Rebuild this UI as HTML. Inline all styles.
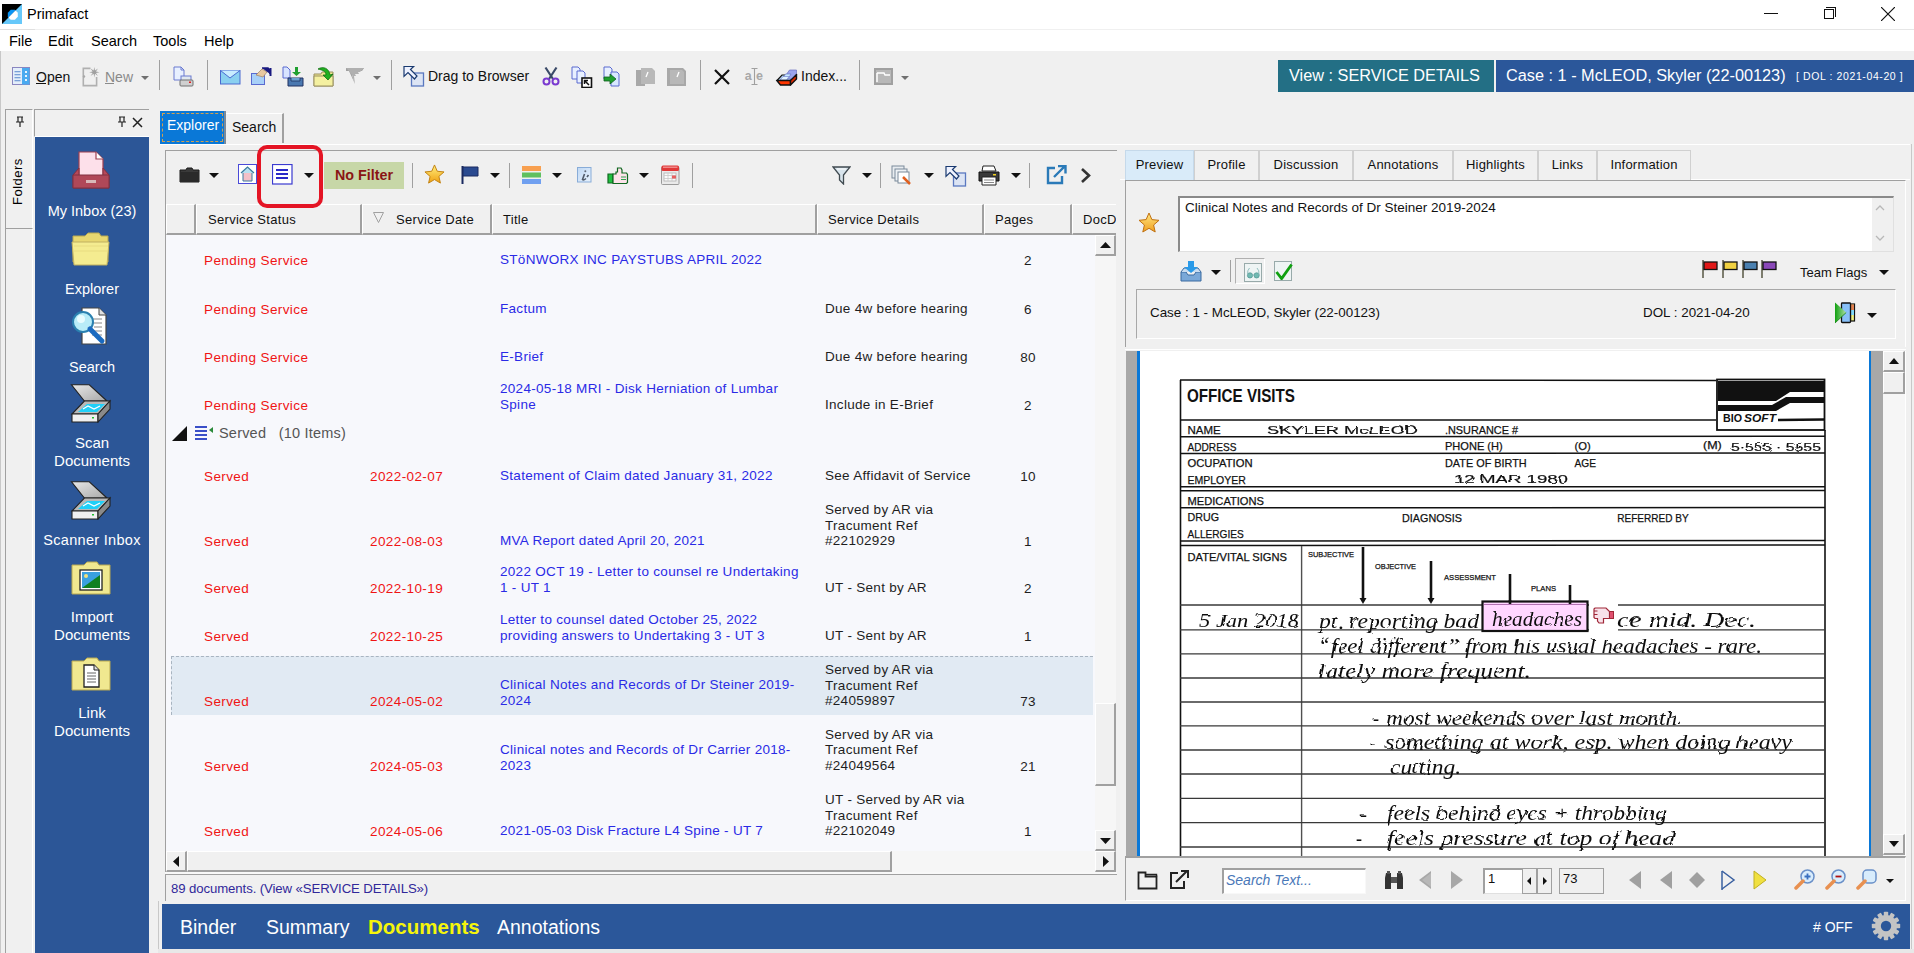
<!DOCTYPE html>
<html><head><meta charset="utf-8">
<style>
*{box-sizing:border-box;margin:0;padding:0}
body{width:1914px;height:953px;overflow:hidden;background:#f0f0f0;font-family:"Liberation Sans",sans-serif;position:relative;font-size:13px;color:#000}
.a{position:absolute}
.t{position:absolute;white-space:nowrap;line-height:16px}
.r{color:#f01414;letter-spacing:0.4px;font-size:13.5px}
.b{color:#2a2ae6;letter-spacing:0.3px;font-size:13.5px}
.k{color:#1e1e1e;letter-spacing:0.3px;font-size:13.5px}
.hdr{position:absolute;top:204px;height:31px;padding-top:1px;background:#f0f0f0;border-right:2px solid #a0a0a0;border-bottom:2px solid #a0a0a0;border-top:1px solid #fff;border-left:1px solid #fff;font-size:13px;line-height:28px;padding-left:11px;letter-spacing:0.3px;color:#111}
.sep{position:absolute;width:1px;background:#a0a0a0}
.ptab{position:absolute;top:150px;height:30px;border:1px solid #d0d0d0;border-bottom:none;background:#f0f0f0;font-size:13px;line-height:28px;text-align:center;color:#111;letter-spacing:0.2px}
.ln{position:absolute;background:#1a1a1a;height:2px}
.ft{position:absolute;font-size:11.5px;color:#111;white-space:nowrap;transform-origin:0 0;transform:scaleX(0.9);line-height:12px}
.hw{position:absolute;font-family:"Liberation Serif",serif;font-style:italic;color:#111;white-space:nowrap;font-size:19px;line-height:20px;letter-spacing:0.5px}
.lbl{position:absolute;color:#fff;text-align:center;font-size:13.5px;line-height:16px;white-space:nowrap}
.arr{position:absolute;width:0;height:0;border-left:5px solid transparent;border-right:5px solid transparent;border-top:5px solid #111}
</style></head><body>

<!-- ===== TITLE BAR ===== -->
<div class="a" style="left:0;top:0;width:1914px;height:29px;background:#fff"></div>
<div class="a" style="left:0;top:29px;width:35px;height:1px;background:#e0e0e0"></div>
<div class="a" style="left:1180px;top:29px;width:734px;height:1px;background:#e6e6e6"></div>
<svg class="a" style="left:2px;top:4px" width="20" height="20" viewBox="0 0 20 20"><defs><clipPath id="ul"><path d="M0 0H20L0 20Z"/></clipPath><clipPath id="lr"><path d="M20 0V20H0Z"/></clipPath></defs><rect width="20" height="20" fill="#66c8fa"/><path d="M0 0H20L0 20Z" fill="#000"/><polygon points="15.79,12.87 12.87,15.79 8.73,15.79 5.81,12.87 5.81,8.73 8.73,5.81 12.87,5.81 15.79,8.73" fill="#0a94f4" clip-path="url(#ul)"/><polygon points="15.79,12.87 12.87,15.79 8.73,15.79 5.81,12.87 5.81,8.73 8.73,5.81 12.87,5.81 15.79,8.73" fill="#fff" clip-path="url(#lr)"/></svg>
<div class="t" style="left:27px;top:6px;font-size:14.5px;color:#000">Primafact</div>
<div class="a" style="left:1764px;top:13px;width:14px;height:1px;background:#111"></div>
<div class="a" style="left:1824px;top:9px;width:10px;height:10px;border:1px solid #111;background:#fff"></div>
<div class="a" style="left:1826px;top:7px;width:10px;height:10px;border-top:1px solid #111;border-right:1px solid #111"></div>
<svg class="a" style="left:1881px;top:7px" width="14" height="14"><path d="M0 0L14 14M14 0L0 14" stroke="#111" stroke-width="1.2"/></svg>

<!-- ===== MENU BAR ===== -->
<div class="a" style="left:0;top:30px;width:1914px;height:21px;background:#fff"></div>
<div class="t" style="left:9px;top:33px;font-size:14.5px">File</div>
<div class="t" style="left:48px;top:33px;font-size:14.5px">Edit</div>
<div class="t" style="left:91px;top:33px;font-size:14.5px">Search</div>
<div class="t" style="left:153px;top:33px;font-size:14.5px">Tools</div>
<div class="t" style="left:204px;top:33px;font-size:14.5px">Help</div>

<!-- ===== TOOLBAR (filled later) ===== -->
<div id="toolbar">
<div class="a" style="left:0;top:51px;width:1px;height:902px;background:#c8c8c8"></div>
<!-- Open -->
<svg class="a" style="left:12px;top:67px" width="19" height="19" viewBox="0 0 19 19"><rect x="0.5" y="0.5" width="17" height="17" fill="#e4eefa" stroke="#8a86c0"/><rect x="10" y="1" width="7.5" height="16.5" fill="#4aaaf0"/><g fill="#7aa0d8"><rect x="2.5" y="4" width="6" height="1.3"/><rect x="2.5" y="7" width="6" height="1.3"/><rect x="2.5" y="10" width="6" height="1.3"/><rect x="2.5" y="13" width="6" height="1.3"/></g><g fill="#e8f4ff"><rect x="13" y="4" width="2" height="2"/><rect x="13" y="8" width="2" height="2"/><rect x="13" y="12" width="2" height="2"/></g></svg>
<div class="t" style="left:36px;top:69px;font-size:14px;color:#111">Open</div>
<div class="a" style="left:36px;top:83px;width:10px;height:1px;background:#111"></div>
<!-- New -->
<svg class="a" style="left:80px;top:65px" width="22" height="23" viewBox="80 65 22 23"><path d="M90.5 68.4H83.3V85.6H96.6V77" stroke="#b0b0b0" stroke-width="1.6" fill="none"/><circle cx="84" cy="76.5" r="1.2" fill="#a8a8a8"/><polygon points="94.30,67.00 94.99,70.54 97.98,68.52 95.96,71.51 99.50,72.20 95.96,72.89 97.98,75.88 94.99,73.86 94.30,77.40 93.61,73.86 90.62,75.88 92.64,72.89 89.10,72.20 92.64,71.51 90.62,68.52 93.61,70.54" fill="#a0a0a0"/></svg>
<div class="t" style="left:105px;top:69px;font-size:14px;color:#8a8a8a">New</div>
<div class="a" style="left:105px;top:83px;width:9px;height:1px;background:#8a8a8a"></div>
<div class="arr" style="left:141px;top:76px;border-top-color:#707070;border-left-width:4px;border-right-width:4px;border-top-width:4px"></div>
<div class="sep" style="left:159px;top:60px;height:30px"></div>
<!-- print docs -->
<svg class="a" style="left:173px;top:66px" width="22" height="22" viewBox="0 0 22 22"><path d="M1 1H8L11 4V14H1Z" fill="#e8f0ff" stroke="#6a7ad0"/><path d="M8 1V4H11" fill="none" stroke="#6a7ad0"/><rect x="8" y="10" width="10" height="5" fill="#e0e8f0" stroke="#6a7ad0"/><rect x="7" y="14" width="13" height="6" rx="1" fill="#d0d0d0" stroke="#707070"/><rect x="16" y="15.5" width="2" height="1.5" fill="#e02020"/></svg>
<div class="sep" style="left:207px;top:60px;height:30px"></div>
<!-- mail -->
<svg class="a" style="left:220px;top:70px" width="21" height="15" viewBox="0 0 21 15"><rect x="0.5" y="0.5" width="19.5" height="13.5" fill="#8ad0f0" stroke="#4a6ad0"/><path d="M0.5 0.5L10 8L20 0.5" fill="#c8ecff" stroke="#4a6ad0"/></svg>
<svg class="a" style="left:251px;top:66px" width="22" height="20" viewBox="0 0 22 20"><rect x="0.5" y="7.5" width="13" height="11" fill="#a8d0f8" stroke="#5a6ad0"/><path d="M5 9L11 3L16 6L12 11Z" fill="#e8c8a0" stroke="#a08060" stroke-width="0.7"/><path d="M11 2H17L19 4V8" fill="#1a1a80" stroke="#1a1a80" stroke-width="1.5"/><rect x="18.5" y="2" width="2" height="8" fill="#1a1a80"/></svg>
<svg class="a" style="left:282px;top:66px" width="22" height="21" viewBox="0 0 22 21"><path d="M1 1H5L8 4V12H1Z" fill="#d8e4ff" stroke="#5a6ad0"/><rect x="13" y="1" width="3" height="5" fill="#20a030"/><path d="M10 6H19L14.5 10Z" fill="#20a030"/><path d="M6 12H21V20H6Z" fill="#4a78b0" stroke="#203060"/><path d="M9 12V15H18V12" fill="#6aa0d0" stroke="#203060" stroke-width="0.8"/></svg>
<svg class="a" style="left:313px;top:66px" width="22" height="21" viewBox="0 0 22 21"><path d="M1 8H8L9 6H20V20H1Z" fill="#f0e890" stroke="#9a9060"/><path d="M1 10H20V20H1Z" fill="#f4f0a0" stroke="#9a9060"/><path d="M5 3C10 0 16 2 17 9L20 8L15 14L10 9L13 9C13 5 9 4 5 3Z" fill="#20b020" stroke="#107010" stroke-width="0.8"/></svg>
<svg class="a" style="left:345px;top:67px" width="20" height="18" viewBox="0 0 20 18"><path d="M1 1H19L17 4H10L13 6H7L10 8H7L10 17L4 4H1Z" fill="#a0a0a0"/><path d="M1 1H19L15 5H13L14 7H10L11 9H9L10 17L7 8L3 3Z" fill="#b0b0b0"/></svg>
<div class="arr" style="left:373px;top:76px;border-top-color:#707070;border-left-width:4px;border-right-width:4px;border-top-width:4px"></div>
<div class="sep" style="left:391px;top:60px;height:30px"></div>
<!-- drag -->
<svg class="a" style="left:403px;top:65px" width="22" height="22" viewBox="0 0 22 22"><rect x="8.5" y="8" width="12" height="13" fill="#dce4f4" stroke="#5a78c0" stroke-width="1.3"/><path d="M1 1.5H10.6L7.5 4.5L14 11L11.5 14L5 7.5L1 11.4Z" fill="#eef2ff" stroke="#1a3a70" stroke-width="1.2"/></svg>
<div class="t" style="left:428px;top:68px;font-size:14px;color:#111">Drag to Browser</div>
<svg class="a" style="left:542px;top:66px" width="18" height="20" viewBox="0 0 18 20"><path d="M3.5 1.5L11 13M14.5 1.5L7 13" stroke="#3a4a68" stroke-width="2.2"/><circle cx="4.5" cy="15.5" r="3" fill="none" stroke="#7a3ad0" stroke-width="2"/><circle cx="13.5" cy="15.5" r="3" fill="none" stroke="#7a3ad0" stroke-width="2"/></svg>
<svg class="a" style="left:571px;top:66px" width="22" height="22" viewBox="0 0 22 22"><path d="M1 1H7L9 3V13H1Z" fill="#e8f0ff" stroke="#5a6ad0"/><path d="M6 5H12L14 7V17H6Z" fill="#e8f0ff" stroke="#5a6ad0"/><rect x="11" y="12" width="9.5" height="9.5" fill="#fff" stroke="#111" stroke-width="1.6"/><path d="M18 19L13.5 14.5M13.5 18V14.5H17" stroke="#111" stroke-width="1.5" fill="none"/></svg>
<svg class="a" style="left:603px;top:66px" width="22" height="22" viewBox="0 0 22 22"><path d="M1 1H7L9 3V13H1Z" fill="#e8f0ff" stroke="#5a6ad0"/><path d="M8 6H14L16 8V20H8Z" fill="#d8e8ff" stroke="#5a6ad0"/><path d="M1 11H7V8L13 13L7 18V15H1Z" fill="#20a030" stroke="#106020" stroke-width="0.8"/></svg>
<svg class="a" style="left:635px;top:67px" width="21" height="20" viewBox="0 0 21 20"><path d="M1 3H9L10 5V19H1Z" fill="#a8a8a8"/><path d="M6 1H17L20 4V17H6Z" fill="#b8b8b8"/><path d="M13 5L11 10" stroke="#fff" stroke-width="1.3"/></svg>
<svg class="a" style="left:666px;top:67px" width="21" height="20" viewBox="0 0 21 20"><path d="M1 1H17L20 4V19H1Z" fill="#a8a8a8"/><path d="M4 3H16L18 5V17H4Z" fill="#b8b8b8"/><path d="M13 5L11 10" stroke="#fff" stroke-width="1.3"/></svg>
<div class="sep" style="left:700px;top:60px;height:30px"></div>
<svg class="a" style="left:713px;top:68px" width="18" height="18"><path d="M2 2L16 16M16 2L2 16" stroke="#111" stroke-width="2.2"/></svg>
<svg class="a" style="left:744px;top:66px" width="22" height="20" viewBox="744 66 22 20"><text x="744.8" y="80.2" font-family="Liberation Sans" font-size="12.5" font-weight="bold" fill="#a8a8a8">a</text><text x="756" y="80.2" font-family="Liberation Sans" font-size="12.5" font-weight="bold" fill="#a8a8a8">e</text><path d="M751.5 68.5H757.5M754.5 68.5V84.5M751.5 84.5H757.5" stroke="#a0a0a0" stroke-width="1.1" fill="none"/></svg>
<svg class="a" style="left:775px;top:67px" width="24" height="20" viewBox="775 67 24 20"><path d="M777 80.5L782 75H796L790.5 80.5Z" fill="#b8d8f8" stroke="#111" stroke-width="1.2"/><path d="M786 75L789.5 70H796.5V75L793 79H786Z" fill="#9aa4ee" stroke="#6a70c0" stroke-width="0.7"/><path d="M782.5 79L785.5 74H791L788 79Z" fill="#c8e8ff" stroke="#6a78c8" stroke-width="0.7"/><path d="M780 80L783 76.5H789L786.5 80Z" fill="#e0f2ff" stroke="#6a78c8" stroke-width="0.6"/><path d="M776.8 80.5H790.5V85H780.5Z" fill="#ff3600" stroke="#111" stroke-width="1.4" stroke-linejoin="round"/><path d="M790.5 80.5L796.5 74.5V79L790.5 85Z" fill="#e02a00" stroke="#111" stroke-width="1.4" stroke-linejoin="round"/></svg>
<div class="t" style="left:801px;top:68px;font-size:14px;color:#111">Index...</div>
<div class="sep" style="left:859px;top:60px;height:30px"></div>
<svg class="a" style="left:874px;top:68px" width="19" height="17"><rect x="0" y="0" width="19" height="17" fill="#a0a0a0"/><rect x="2" y="2" width="15" height="13" fill="#b8b8b8"/><path d="M3 5H10L11 7H16" stroke="#fff" stroke-width="1.5" fill="none"/><path d="M3 5V14" stroke="#fff" stroke-width="1.5"/></svg>
<div class="arr" style="left:901px;top:76px;border-top-color:#707070;border-left-width:4px;border-right-width:4px;border-top-width:4px"></div>

</div>

<!-- ===== HEADER LABELS ===== -->
<div class="a" style="left:1278px;top:60px;width:216px;height:32px;background:#236f85"></div>
<div class="t" style="left:1289px;top:66px;font-size:16.3px;color:#fff;line-height:18px">View : SERVICE DETAILS</div>
<div class="a" style="left:1496px;top:60px;width:418px;height:32px;background:#2b579a"></div>
<div class="t" style="left:1506px;top:66px;font-size:16.3px;color:#fff;line-height:18px">Case : 1 - McLEOD, Skyler (22-00123)</div>
<div class="t" style="left:1796px;top:69px;font-size:10.5px;color:#fff;line-height:14px;letter-spacing:0.6px">[ DOL : 2021-04-20 ]</div>

<!-- ===== LEFT SIDEBAR ===== -->
<div class="a" style="left:5px;top:109px;width:28px;height:119px;border-left:1px solid #a0a0a0;border-top:1px solid #a0a0a0;border-right:1px solid #fff;background:#f0f0f0"></div>
<div class="a" style="left:5px;top:228px;width:28px;height:725px;border-left:1px solid #a0a0a0;border-top:1px solid #a0a0a0;border-right:1px solid #fff;background:#f0f0f0"></div>
<div class="t" style="left:10px;top:205px;font-size:13px;transform:rotate(-90deg);transform-origin:0 0;letter-spacing:0.5px">Folders</div>
<div class="a" style="left:34px;top:109px;width:115px;height:28px;border-top:1px solid #a0a0a0;border-left:1px solid #a0a0a0;border-bottom:1px solid #fff;background:#f0f0f0"></div>
<div class="a" style="left:35px;top:137px;width:114px;height:816px;background:#2c5697"></div>

<div id="sidebar">
<svg class="a" style="left:15px;top:116px" width="10" height="12" viewBox="0 0 10 12"><path d="M2 1H8M3 1V6H7V1M1 6H9M5 6V11" stroke="#222" stroke-width="1.2" fill="none"/></svg>
<svg class="a" style="left:117px;top:116px" width="10" height="12" viewBox="0 0 10 12"><path d="M2 1H8M3 1V6H7V1M1 6H9M5 6V11" stroke="#222" stroke-width="1.2" fill="none"/></svg>
<svg class="a" style="left:132px;top:117px" width="11" height="11"><path d="M1 1L10 10M10 1L1 10" stroke="#222" stroke-width="1.5"/></svg>
<!-- inbox -->
<svg class="a" style="left:72px;top:151px" width="38" height="38" viewBox="0 0 38 38"><path d="M7 1H24L31 8V28H7Z" fill="#fde0ea" stroke="#a04050" stroke-width="1.2"/><path d="M24 1V8H31" fill="#fff" stroke="#a04050" stroke-width="1.2"/><path d="M1 24L7 17V26H31V17L37 24V37H1Z" fill="#b84858" stroke="#803040" stroke-width="1"/><path d="M1 24H37V37H1Z" fill="#b04858" stroke="#803040"/><rect x="14" y="29" width="10" height="3" fill="#d8b8b8"/></svg>
<div class="lbl" style="left:35px;width:114px;top:203px;font-size:14.5px">My Inbox (23)</div>
<!-- explorer folder -->
<svg class="a" style="left:71px;top:232px" width="40" height="34" viewBox="0 0 40 34"><path d="M2 4H14L17 1H28L30 4H37V30H2Z" fill="#e8d870" stroke="#b8a850"/><path d="M1 10H38L36 33H3Z" fill="#f4ec90" stroke="#c0b060"/><path d="M3 14H37M3 19H37" stroke="#e8dc80" stroke-width="1"/></svg>
<div class="lbl" style="left:35px;width:114px;top:281px;font-size:14.5px">Explorer</div>
<!-- search -->
<svg class="a" style="left:70px;top:306px" width="41" height="40" viewBox="0 0 41 40"><path d="M12 2H29L36 9V38H12Z" fill="#fff" stroke="#444" stroke-width="1.2"/><path d="M29 2V9H36" fill="#e0e0e0" stroke="#444"/><g stroke="#888" stroke-width="1.2"><path d="M20 13H32M22 17H32M24 21H32M22 25H32M22 29H32"/></g><circle cx="13" cy="16" r="10" fill="#b8ecf8" stroke="#2a80b0" stroke-width="2"/><circle cx="11" cy="13" r="4" fill="#e8fcff"/><path d="M20 23L32 35" stroke="#1a6ac0" stroke-width="5" stroke-linecap="round"/></svg>
<div class="lbl" style="left:35px;width:114px;top:359px;font-size:14.5px">Search</div>
<!-- scan -->
<svg class="a" style="left:70px;top:383px" width="42" height="40" viewBox="0 0 42 40"><defs><linearGradient id="lidg" x1="0" y1="0" x2="1" y2="1"><stop offset="0" stop-color="#e8e8e8"/><stop offset="1" stop-color="#a8a8a8"/></linearGradient></defs><path d="M1.5 1.8H19.3L37 18H14.4Z" fill="url(#lidg)" stroke="#222" stroke-width="1.1"/><path d="M2 31L14.4 18H40L28 31Z" fill="#b8b8b8" stroke="#222" stroke-width="1.1"/><path d="M8 29L17 21H35L27 29Z" fill="#20d0f8"/><path d="M13 26L18 23L24 26L30 23" stroke="#fff" stroke-width="1.2" fill="none"/><path d="M2 31H28V39H2Z" fill="#f0f0f0" stroke="#222" stroke-width="1.1"/><path d="M28 31L40 18V26L28 39Z" fill="#8a8a8a" stroke="#222" stroke-width="1.1"/><rect x="22" y="34" width="2" height="1.5" fill="#20c030"/></svg>
<div class="lbl" style="left:35px;width:114px;top:434px;font-size:15px;line-height:18px">Scan<br>Documents</div>
<!-- scanner inbox -->
<svg class="a" style="left:70px;top:480px" width="42" height="40" viewBox="0 0 42 40"><defs><linearGradient id="lidg" x1="0" y1="0" x2="1" y2="1"><stop offset="0" stop-color="#e8e8e8"/><stop offset="1" stop-color="#a8a8a8"/></linearGradient></defs><path d="M1.5 1.8H19.3L37 18H14.4Z" fill="url(#lidg)" stroke="#222" stroke-width="1.1"/><path d="M2 31L14.4 18H40L28 31Z" fill="#b8b8b8" stroke="#222" stroke-width="1.1"/><path d="M8 29L17 21H35L27 29Z" fill="#20d0f8"/><path d="M13 26L18 23L24 26L30 23" stroke="#fff" stroke-width="1.2" fill="none"/><path d="M2 31H28V39H2Z" fill="#f0f0f0" stroke="#222" stroke-width="1.1"/><path d="M28 31L40 18V26L28 39Z" fill="#8a8a8a" stroke="#222" stroke-width="1.1"/><rect x="22" y="34" width="2" height="1.5" fill="#20c030"/></svg>
<div class="lbl" style="left:35px;width:114px;top:532px;font-size:14.5px;letter-spacing:0.3px">Scanner Inbox</div>
<!-- import -->
<svg class="a" style="left:71px;top:561px" width="40" height="34" viewBox="0 0 40 34"><path d="M1 4H13L16 1H26L28 4H39V33H1Z" fill="#f0e890" stroke="#b8a850"/><rect x="9" y="9" width="22" height="20" fill="#fff" stroke="#222" stroke-width="1.3"/><rect x="11" y="11" width="18" height="16" fill="#3aa0e0"/><path d="M11 27L29 14V27Z" fill="#108020"/><circle cx="15" cy="15" r="2" fill="#f0e080"/></svg>
<div class="lbl" style="left:35px;width:114px;top:608px;font-size:15px;line-height:18px">Import<br>Documents</div>
<!-- link -->
<svg class="a" style="left:71px;top:657px" width="40" height="34" viewBox="0 0 40 34"><path d="M1 4H13L16 1H26L28 4H39V33H1Z" fill="#f0e890" stroke="#b8a850"/><path d="M13 8H23L28 13V30H13Z" fill="#fff" stroke="#222" stroke-width="1.3"/><path d="M23 8V13H28" fill="#ddd" stroke="#222"/><path d="M16 16H25M16 19H25M16 22H25M16 25H25" stroke="#666"/></svg>
<div class="lbl" style="left:35px;width:114px;top:704px;font-size:15px;line-height:18px">Link<br>Documents</div>

</div>

<!-- ===== EXPLORER TABS ===== -->
<div class="a" style="left:160px;top:111px;width:66px;height:34px;background:#0a78d7;border-right:2px solid #7a8a9a"></div>
<div class="a" style="left:162px;top:113px;width:61px;height:29px;border:1px dashed #d0a050"></div>
<div class="t" style="left:167px;top:117px;font-size:14px;color:#fff">Explorer</div>
<div class="a" style="left:226px;top:113px;width:58px;height:30px;border-right:2px solid #a0a0a0;border-top:1px solid #fff"></div>
<div class="t" style="left:232px;top:119px;font-size:14px;color:#111">Search</div>
<div class="a" style="left:160px;top:144px;width:1750px;height:1px;background:#fff"></div>

<!-- ===== LIST PANEL ===== -->
<div class="a" style="left:165px;top:150px;width:952px;height:724px;border-left:1px solid #a0a0a0;border-top:1px solid #a0a0a0;background:#f0f0f0"></div>
<div id="listtb">
<svg class="a" style="left:179px;top:167px" width="21" height="16" viewBox="0 0 21 16"><path d="M1 3H7L8 1H13L14 3H20V15H1Z" fill="#3a3a3a" stroke="#1a1a1a"/><path d="M1 5H20V15H1Z" fill="#2a2a2a"/></svg>
<div class="arr" style="left:209px;top:173px"></div>
<svg class="a" style="left:238px;top:164px" width="20" height="21" viewBox="0 0 20 21"><rect x="0.5" y="0.5" width="18" height="19" fill="#fff" stroke="#4a4ad8"/><path d="M3 9L9.5 3L16 9" fill="#b8e0f0" stroke="#3a7aa0" stroke-width="1.2"/><path d="M5 9V17H14V9" fill="#f4c0c8" stroke="#3a7aa0"/></svg>
<svg class="a" style="left:272px;top:164px" width="21" height="21" viewBox="0 0 21 21"><rect x="0.5" y="0.5" width="19.5" height="19.5" fill="#fff" stroke="#3a3ad0" stroke-width="1.2"/><path d="M4 6H16M4 10H16M4 14H16" stroke="#2a2ac8" stroke-width="2"/></svg>
<div class="arr" style="left:304px;top:173px"></div>
<div class="a" style="left:257px;top:145px;width:66px;height:63px;border:4px solid #e41424;border-radius:10px;z-index:5"></div>
<div class="a" style="left:324px;top:162px;width:80px;height:27px;background:#c7d7a7"></div>
<div class="t" style="left:335px;top:167px;font-size:14.3px;font-weight:bold;color:#8a1414">No Filter</div>
<div class="sep" style="left:412px;top:163px;height:25px"></div>
<svg class="a" style="left:424px;top:164px" width="21" height="21" viewBox="0 0 22 22"><defs><linearGradient id="sg2" x1="0" y1="0" x2="0" y2="1"><stop offset="0" stop-color="#fff080"/><stop offset="1" stop-color="#f0a010"/></linearGradient></defs><path d="M11 1L13.9 7.6L21 8.3L15.6 13L17.2 20L11 16.3L4.8 20L6.4 13L1 8.3L8.1 7.6Z" fill="url(#sg2)" stroke="#c08010" stroke-width="1"/></svg>
<svg class="a" style="left:461px;top:165px" width="18" height="20" viewBox="0 0 18 20"><path d="M1.5 1V19" stroke="#1a2a60" stroke-width="2"/><path d="M2 2H17V11H2Z" fill="#2a4a90" stroke="#1a2a60"/></svg>
<div class="arr" style="left:490px;top:173px"></div>
<div class="sep" style="left:509px;top:163px;height:25px"></div>
<svg class="a" style="left:522px;top:166px" width="19" height="18"><rect x="0" y="0" width="19" height="5" fill="#f8a050"/><rect x="0" y="6.5" width="19" height="5" fill="#60c060"/><rect x="0" y="13" width="19" height="5" fill="#70a0f0"/></svg>
<div class="arr" style="left:552px;top:173px"></div>
<svg class="a" style="left:577px;top:167px" width="15" height="16" viewBox="0 0 15 16"><defs><linearGradient id="ig" x1="0" y1="0" x2="1" y2="1"><stop offset="0" stop-color="#c0d8f4"/><stop offset="1" stop-color="#e8f2fc"/></linearGradient></defs><rect x="0.5" y="0.5" width="13.5" height="14.5" fill="url(#ig)" stroke="#88acd8"/><circle cx="8.3" cy="4.3" r="1" fill="#606a78"/><path d="M7.5 7L5.5 12.5Q6.5 13.5 9 11.5M10 10L11.5 8" stroke="#505a68" stroke-width="1.6" fill="none"/></svg>
<svg class="a" style="left:607px;top:167px" width="22" height="18" viewBox="0 0 22 18"><path d="M1 7H6V16H1Z" fill="#20c040" stroke="#106820" stroke-width="1.2"/><path d="M6 7H9V5H10.5V1H14L15 3V6H19.5L20.5 7.5V15.5L19.5 16.5H6Z" fill="#fde2ea" stroke="#106820" stroke-width="1.2"/><path d="M14 10H19M14 12.5H19" stroke="#30a050" stroke-width="1.2"/></svg>
<div class="arr" style="left:639px;top:173px"></div>
<svg class="a" style="left:661px;top:165px" width="19" height="20" viewBox="0 0 19 20"><rect x="0.5" y="2" width="17.5" height="17.5" rx="1" fill="#eaeaea" stroke="#9a9a9a"/><rect x="0.5" y="0.5" width="17.5" height="5.5" rx="1.5" fill="#e03838"/><rect x="2" y="1.5" width="14.5" height="1.5" fill="#f08888"/><rect x="3" y="8" width="12" height="8" fill="#fafafa" stroke="#b0b0b0" stroke-width="0.8"/><path d="M3 10.5H15M3 13.5H15M7 8V16M11 8V16" stroke="#c8c8c8" stroke-width="0.8"/><rect x="11" y="10.5" width="4" height="3" fill="#e86060"/></svg>
<div class="sep" style="left:692px;top:163px;height:25px"></div>
<!-- right side -->
<svg class="a" style="left:832px;top:166px" width="19" height="19" viewBox="0 0 19 19"><path d="M1 1H18L11.5 9V18L7.5 14V9Z" fill="#d8e4ec" stroke="#404a50" stroke-width="1.3"/><path d="M5 3H14" stroke="#fff"/></svg>
<div class="arr" style="left:862px;top:173px"></div>
<div class="sep" style="left:880px;top:163px;height:25px"></div>
<svg class="a" style="left:891px;top:165px" width="22" height="22" viewBox="0 0 22 22"><rect x="1" y="1" width="12" height="12" fill="#e8ecf0" stroke="#7a8a9a"/><rect x="4" y="4" width="12" height="12" fill="#eef2f6" stroke="#7a8a9a"/><rect x="7" y="7" width="11" height="11" fill="#fff" stroke="#7a8a9a"/><path d="M12 12L19 19" stroke="#e06020" stroke-width="2.5"/></svg>
<div class="arr" style="left:924px;top:173px"></div>
<svg class="a" style="left:945px;top:165px" width="22" height="22" viewBox="0 0 22 22"><rect x="8.5" y="8" width="12" height="13" fill="#dce4f4" stroke="#5a78c0" stroke-width="1.3"/><path d="M1 1.5H10.6L7.5 4.5L14 11L11.5 14L5 7.5L1 11.4Z" fill="#eef2ff" stroke="#1a3a70" stroke-width="1.2"/></svg>
<svg class="a" style="left:978px;top:165px" width="22" height="21" viewBox="0 0 22 21"><path d="M5 1H16L18 6H4Z" fill="#fff" stroke="#222"/><path d="M1 7H21V16H1Z" fill="#3a3a3a" stroke="#111"/><path d="M4 12H18V20H4Z" fill="#fff" stroke="#222"/><path d="M6 15H16M6 17.5H16" stroke="#888"/><rect x="15" y="9" width="3" height="1.5" fill="#f0d020"/></svg>
<div class="arr" style="left:1011px;top:173px"></div>
<div class="sep" style="left:1029px;top:163px;height:25px"></div>
<svg class="a" style="left:1046px;top:165px" width="21" height="20" viewBox="0 0 21 20"><path d="M9 3H2V18H16V11" stroke="#2a7ab8" stroke-width="2.4" fill="none"/><path d="M8 12L18 2M12 1H19.5V8.5" stroke="#2a7ab8" stroke-width="2.4" fill="none"/></svg>
<svg class="a" style="left:1080px;top:167px" width="12" height="17"><path d="M2 2L9 8.5L2 15" stroke="#333" stroke-width="2.6" fill="none"/></svg>

</div>
<div class="a" style="left:166px;top:235px;width:929px;height:616px;background:#f7f8fc"></div>
<div id="cols">
<div class="hdr" style="left:166px;width:30px"></div>
<div class="hdr" style="left:196px;width:166px">Service Status</div>
<div class="hdr" style="left:362px;width:130px;padding-left:33px">Service Date</div>
<svg class="a" style="left:373px;top:212px" width="11" height="11"><path d="M0.5 0.5H10.5L5.5 10.5Z" fill="none" stroke="#a0a0a0"/></svg>
<div class="hdr" style="left:492px;width:325px;padding-left:10px">Title</div>
<div class="hdr" style="left:817px;width:167px;padding-left:10px">Service Details</div>
<div class="hdr" style="left:984px;width:88px;padding-left:10px">Pages</div>
<div class="hdr" style="left:1072px;width:44px;padding-left:10px;border-right:none;overflow:hidden">DocD</div>
</div>
<div id="rows">
<div class="a" style="left:171px;top:656px;width:922px;height:59px;background:#e1eaf3;border-top:1px dashed #a8b4c0;border-left:1px dashed #a8b4c0"></div>
<div class="t r" style="left:204px;top:253px">Pending Service</div>
<div class="t b" style="left:500px;top:252px">STöNWORX INC PAYSTUBS APRIL 2022</div>
<div class="t k" style="left:1008px;top:253px;width:40px;text-align:center;letter-spacing:0.3px">2</div>
<div class="t r" style="left:204px;top:302px">Pending Service</div>
<div class="t b" style="left:500px;top:301px">Factum</div>
<div class="t k" style="left:825px;top:301px">Due 4w before hearing</div>
<div class="t k" style="left:1008px;top:302px;width:40px;text-align:center;letter-spacing:0.3px">6</div>
<div class="t r" style="left:204px;top:350px">Pending Service</div>
<div class="t b" style="left:500px;top:349px">E-Brief</div>
<div class="t k" style="left:825px;top:349px">Due 4w before hearing</div>
<div class="t k" style="left:1008px;top:350px;width:40px;text-align:center;letter-spacing:0.3px">80</div>
<div class="t r" style="left:204px;top:398px">Pending Service</div>
<div class="t b" style="left:500px;top:381px">2024-05-18 MRI - Disk Herniation of Lumbar</div>
<div class="t b" style="left:500px;top:397px">Spine</div>
<div class="t k" style="left:825px;top:397px">Include in E-Brief</div>
<div class="t k" style="left:1008px;top:398px;width:40px;text-align:center;letter-spacing:0.3px">2</div>
<div class="t r" style="left:204px;top:469px">Served</div>
<div class="t r" style="left:370px;top:469px">2022-02-07</div>
<div class="t b" style="left:500px;top:468px">Statement of Claim dated January 31, 2022</div>
<div class="t k" style="left:825px;top:468px">See Affidavit of Service</div>
<div class="t k" style="left:1008px;top:469px;width:40px;text-align:center;letter-spacing:0.3px">10</div>
<div class="t r" style="left:204px;top:534px">Served</div>
<div class="t r" style="left:370px;top:534px">2022-08-03</div>
<div class="t b" style="left:500px;top:533px">MVA Report dated April 20, 2021</div>
<div class="t k" style="left:825px;top:502px">Served by AR via</div>
<div class="t k" style="left:825px;top:518px">Tracument Ref</div>
<div class="t k" style="left:825px;top:533px">#22102929</div>
<div class="t k" style="left:1008px;top:534px;width:40px;text-align:center;letter-spacing:0.3px">1</div>
<div class="t r" style="left:204px;top:581px">Served</div>
<div class="t r" style="left:370px;top:581px">2022-10-19</div>
<div class="t b" style="left:500px;top:564px">2022 OCT 19 - Letter to counsel re Undertaking</div>
<div class="t b" style="left:500px;top:580px">1 - UT 1</div>
<div class="t k" style="left:825px;top:580px">UT - Sent by AR</div>
<div class="t k" style="left:1008px;top:581px;width:40px;text-align:center;letter-spacing:0.3px">2</div>
<div class="t r" style="left:204px;top:629px">Served</div>
<div class="t r" style="left:370px;top:629px">2022-10-25</div>
<div class="t b" style="left:500px;top:612px">Letter to counsel dated October 25, 2022</div>
<div class="t b" style="left:500px;top:628px">providing answers to Undertaking 3 - UT 3</div>
<div class="t k" style="left:825px;top:628px">UT - Sent by AR</div>
<div class="t k" style="left:1008px;top:629px;width:40px;text-align:center;letter-spacing:0.3px">1</div>
<div class="t r" style="left:204px;top:694px">Served</div>
<div class="t r" style="left:370px;top:694px">2024-05-02</div>
<div class="t b" style="left:500px;top:677px">Clinical Notes and Records of Dr Steiner 2019-</div>
<div class="t b" style="left:500px;top:693px">2024</div>
<div class="t k" style="left:825px;top:662px">Served by AR via</div>
<div class="t k" style="left:825px;top:678px">Tracument Ref</div>
<div class="t k" style="left:825px;top:693px">#24059897</div>
<div class="t k" style="left:1008px;top:694px;width:40px;text-align:center;letter-spacing:0.3px">73</div>
<div class="t r" style="left:204px;top:759px">Served</div>
<div class="t r" style="left:370px;top:759px">2024-05-03</div>
<div class="t b" style="left:500px;top:742px">Clinical notes and Records of Dr Carrier 2018-</div>
<div class="t b" style="left:500px;top:758px">2023</div>
<div class="t k" style="left:825px;top:727px">Served by AR via</div>
<div class="t k" style="left:825px;top:742px">Tracument Ref</div>
<div class="t k" style="left:825px;top:758px">#24049564</div>
<div class="t k" style="left:1008px;top:759px;width:40px;text-align:center;letter-spacing:0.3px">21</div>
<div class="t r" style="left:204px;top:824px">Served</div>
<div class="t r" style="left:370px;top:824px">2024-05-06</div>
<div class="t b" style="left:500px;top:823px">2021-05-03 Disk Fracture L4 Spine - UT 7</div>
<div class="t k" style="left:825px;top:792px">UT - Served by AR via</div>
<div class="t k" style="left:825px;top:808px">Tracument Ref</div>
<div class="t k" style="left:825px;top:823px">#22102049</div>
<div class="t k" style="left:1008px;top:824px;width:40px;text-align:center;letter-spacing:0.3px">1</div>
<svg class="a" style="left:172px;top:426px" width="16" height="16"><path d="M0 15L15 0V15Z" fill="#111"/></svg>
<svg class="a" style="left:195px;top:425px" width="20" height="16"><g fill="#3a4fc8"><rect x="0" y="1" width="12" height="2"/><rect x="0" y="5" width="12" height="2"/><rect x="0" y="9" width="12" height="2"/><rect x="0" y="13" width="12" height="2"/></g><path d="M18 2L14 5L18 8Z" fill="#2a8a3a"/></svg>
<div class="t" style="left:219px;top:425px;color:#555;font-size:14.5px;letter-spacing:0.2px">Served&nbsp;&nbsp;&nbsp;(10 Items)</div>
</div>
<div id="scroll">
<!-- vertical scrollbar -->
<div class="a" style="left:1095px;top:235px;width:21px;height:616px;background:#f6f6f6"></div>
<div class="a" style="left:1095px;top:235px;width:21px;height:21px;background:#f0f0f0;border-right:2px solid #a0a0a0;border-bottom:2px solid #a0a0a0;border-left:1px solid #fff;border-top:1px solid #fff"></div>
<svg class="a" style="left:1100px;top:242px" width="11" height="6"><path d="M0 6L5.5 0L11 6Z" fill="#111"/></svg>
<div class="a" style="left:1095px;top:703px;width:21px;height:83px;background:#f0f0f0;border-right:2px solid #a0a0a0;border-bottom:2px solid #a0a0a0;border-left:1px solid #fff;border-top:1px solid #fff"></div>
<div class="a" style="left:1095px;top:830px;width:21px;height:21px;background:#f0f0f0;border-right:2px solid #a0a0a0;border-bottom:2px solid #a0a0a0;border-left:1px solid #fff;border-top:1px solid #fff"></div>
<svg class="a" style="left:1100px;top:838px" width="11" height="6"><path d="M0 0L5.5 6L11 0Z" fill="#111"/></svg>
<!-- horizontal scrollbar -->
<div class="a" style="left:166px;top:851px;width:950px;height:21px;background:#f6f6f6"></div>
<div class="a" style="left:166px;top:851px;width:21px;height:21px;background:#f0f0f0;border-right:2px solid #a0a0a0;border-bottom:2px solid #a0a0a0;border-left:1px solid #fff;border-top:1px solid #fff"></div>
<svg class="a" style="left:173px;top:856px" width="6" height="11"><path d="M6 0L0 5.5L6 11Z" fill="#111"/></svg>
<div class="a" style="left:187px;top:851px;width:705px;height:21px;background:#f0f0f0;border-right:2px solid #a0a0a0;border-bottom:2px solid #a0a0a0;border-left:1px solid #fff;border-top:1px solid #fff"></div>
<div class="a" style="left:1095px;top:851px;width:21px;height:21px;background:#f0f0f0;border-right:2px solid #a0a0a0;border-bottom:2px solid #a0a0a0;border-left:1px solid #fff;border-top:1px solid #fff"></div>
<svg class="a" style="left:1103px;top:856px" width="6" height="11"><path d="M0 0L6 5.5L0 11Z" fill="#111"/></svg>
<div class="a" style="left:165px;top:872px;width:952px;height:2px;background:#f8f8f8"></div>

</div>

<!-- status -->
<div class="a" style="left:165px;top:874px;width:952px;height:27px;border-left:1px solid #a0a0a0;border-top:1px solid #a0a0a0;background:#f0f0f0"></div>
<div class="t" style="left:171px;top:881px;font-size:13.2px;color:#30289a;letter-spacing:-0.1px">89 documents. (View «SERVICE DETAILS»)</div>

<!-- ===== BOTTOM BAR ===== -->
<div class="a" style="left:1911px;top:144px;width:1px;height:809px;background:#c8c8c8"></div>
<div class="a" style="left:158px;top:901px;width:1px;height:52px;background:#c8c8c8"></div>
<div class="a" style="left:162px;top:904px;width:1748px;height:45px;background:#2b579a"></div>
<div class="a" style="left:158px;top:949px;width:1756px;height:4px;background:#e8e8e8"></div>
<div class="t" style="left:180px;top:916px;font-size:19.5px;line-height:22px;color:#fff">Binder</div>
<div class="t" style="left:266px;top:916px;font-size:19.5px;line-height:22px;color:#fff">Summary</div>
<div class="t" style="left:368px;top:916px;font-size:20.5px;line-height:22px;color:#f5f50a;font-weight:bold">Documents</div>
<div class="t" style="left:497px;top:916px;font-size:19.5px;line-height:22px;color:#fff">Annotations</div>
<div class="t" style="left:1813px;top:919px;font-size:14px;line-height:16px;color:#fff">#&nbsp;OFF</div>
<div id="gear">
<svg class="a" style="left:1871px;top:911px" width="30" height="30" viewBox="-15 -15 30 30"><g fill="#c4c4c4"><rect x="-2.2" y="-14.2" width="4.4" height="5" rx="0.8" transform="rotate(0)"/><rect x="-2.2" y="-14.2" width="4.4" height="5" rx="0.8" transform="rotate(30)"/><rect x="-2.2" y="-14.2" width="4.4" height="5" rx="0.8" transform="rotate(60)"/><rect x="-2.2" y="-14.2" width="4.4" height="5" rx="0.8" transform="rotate(90)"/><rect x="-2.2" y="-14.2" width="4.4" height="5" rx="0.8" transform="rotate(120)"/><rect x="-2.2" y="-14.2" width="4.4" height="5" rx="0.8" transform="rotate(150)"/><rect x="-2.2" y="-14.2" width="4.4" height="5" rx="0.8" transform="rotate(180)"/><rect x="-2.2" y="-14.2" width="4.4" height="5" rx="0.8" transform="rotate(210)"/><rect x="-2.2" y="-14.2" width="4.4" height="5" rx="0.8" transform="rotate(240)"/><rect x="-2.2" y="-14.2" width="4.4" height="5" rx="0.8" transform="rotate(270)"/><rect x="-2.2" y="-14.2" width="4.4" height="5" rx="0.8" transform="rotate(300)"/><rect x="-2.2" y="-14.2" width="4.4" height="5" rx="0.8" transform="rotate(330)"/><circle r="11"/></g><circle r="5.2" fill="#2b579a"/></svg>

</div>

<!-- ===== RIGHT PANEL ===== -->
<div id="right">
<!-- tabs -->
<div class="a" style="left:1120px;top:179px;width:790px;height:1px;background:#fff"></div>
<div class="ptab" style="left:1125px;width:69px;background:#d9ebf9;border-color:#c5d9ea">Preview</div>
<div class="ptab" style="left:1194px;width:65px">Profile</div>
<div class="ptab" style="left:1259px;width:94px">Discussion</div>
<div class="ptab" style="left:1353px;width:100px">Annotations</div>
<div class="ptab" style="left:1453px;width:85px">Highlights</div>
<div class="ptab" style="left:1538px;width:59px">Links</div>
<div class="ptab" style="left:1597px;width:94px">Information</div>
<!-- info box -->
<div class="a" style="left:1125px;top:180px;width:781px;height:167px;border-left:1px solid #a0a0a0;border-top:1px solid #a0a0a0;border-right:1px solid #fff;background:#f0f0f0"></div>
<svg class="a" style="left:1138px;top:212px" width="22" height="22" viewBox="0 0 22 22"><defs><linearGradient id="sg" x1="0" y1="0" x2="0" y2="1"><stop offset="0" stop-color="#ffe680"/><stop offset="1" stop-color="#f0a020"/></linearGradient></defs><path d="M11 1L13.9 7.6L21 8.3L15.6 13L17.2 20L11 16.3L4.8 20L6.4 13L1 8.3L8.1 7.6Z" fill="url(#sg)" stroke="#c07010" stroke-width="1"/></svg>
<div class="a" style="left:1178px;top:196px;width:716px;height:56px;background:#fff;border-left:2px solid #8a8a8a;border-top:2px solid #8a8a8a;border-right:1px solid #e0e0e0;border-bottom:1px solid #e0e0e0"></div>
<div class="t" style="left:1185px;top:200px;font-size:13.5px;color:#111">Clinical Notes and Records of Dr Steiner 2019-2024</div>
<div class="a" style="left:1872px;top:198px;width:21px;height:53px;background:#f0f0f0"></div>
<svg class="a" style="left:1874px;top:203px" width="12" height="40"><path d="M2 7L6 3L10 7M2 33L6 37L10 33" stroke="#b8b8b8" stroke-width="1.3" fill="none"/></svg>
<!-- icon row -->
<svg class="a" style="left:1180px;top:260px" width="22" height="22" viewBox="0 0 22 22"><path d="M1 12H6L8 15H14L16 12H21V21H1Z" fill="#7aa8d8" stroke="#3a6aa0"/><path d="M1 12L4 8H18L21 12" fill="#c8dcf0" stroke="#3a6aa0"/><path d="M8 1H14V7H18L11 13L4 7H8Z" fill="#2a9ae8"/></svg>
<div class="arr" style="left:1211px;top:270px"></div>
<div class="sep" style="left:1230px;top:260px;height:22px"></div>
<div class="a" style="left:1235px;top:258px;width:30px;height:26px;border-left:1px solid #b0b0b0;border-top:1px solid #b0b0b0;border-right:1px solid #fff;border-bottom:1px solid #fff"></div>
<div class="a" style="left:1244px;top:263px;width:18px;height:19px;border:1.5px solid #98aaaa;background:#eef4f4"></div>
<svg class="a" style="left:1244px;top:263px" width="18" height="19" viewBox="1244 263 18 19"><circle cx="1250" cy="275.4" r="2.6" fill="#70bab2" stroke="#5a9a98" stroke-width="0.8"/><circle cx="1256.6" cy="275.4" r="2.6" fill="#70bab2" stroke="#5a9a98" stroke-width="0.8"/><path d="M1247.6 275Q1247.2 270 1249.5 268M1259 275Q1259.4 270 1257 268M1252.5 275H1254" stroke="#88b8b8" stroke-width="0.9" fill="none"/></svg>
<div class="a" style="left:1274px;top:261px;width:18px;height:20px;border:1.5px solid #98aaaa;background:#eef4f4"></div>
<svg class="a" style="left:1274px;top:261px" width="20" height="20" viewBox="1274 261 20 20"><path d="M1276.5 272L1281.6 278.6L1291.6 264.5" stroke="#10a010" stroke-width="2.8" fill="none" stroke-linejoin="round"/></svg>
<!-- flags -->
<svg class="a" style="left:1700px;top:259px" width="80" height="20"><g transform="translate(0,0)"><path d="M3 1V19" stroke="#707060" stroke-width="1.8"/><rect x="4" y="3" width="13" height="7.5" fill="#e01818" stroke="#111" stroke-width="1.3"/></g><g transform="translate(20,0)"><path d="M3 1V19" stroke="#707060" stroke-width="1.8"/><rect x="4" y="3" width="13" height="7.5" fill="#f0d040" stroke="#111" stroke-width="1.3"/></g><g transform="translate(40,0)"><path d="M3 1V19" stroke="#707060" stroke-width="1.8"/><rect x="4" y="3" width="13" height="7.5" fill="#4a80b0" stroke="#111" stroke-width="1.3"/></g><g transform="translate(59,0)"><path d="M3 1V19" stroke="#707060" stroke-width="1.8"/><rect x="4" y="3" width="13" height="7.5" fill="#8a48b8" stroke="#111" stroke-width="1.3"/></g></svg>
<div class="t" style="left:1800px;top:265px;font-size:13px;color:#111">Team Flags</div>
<div class="arr" style="left:1879px;top:270px"></div>
<!-- case box -->
<div class="a" style="left:1136px;top:289px;width:760px;height:50px;border-left:1px solid #a8a8a8;border-top:1px solid #a8a8a8;border-right:1px solid #fff;border-bottom:1px solid #fff"></div>
<div class="t" style="left:1150px;top:305px;font-size:13.4px;color:#111">Case : 1 - McLEOD, Skyler (22-00123)</div>
<div class="t" style="left:1643px;top:305px;font-size:13.4px;color:#111">DOL : 2021-04-20</div>
<svg class="a" style="left:1834px;top:302px" width="22" height="22" viewBox="0 0 22 22"><defs><linearGradient id="gg" x1="0" y1="0" x2="1" y2="0"><stop offset="0" stop-color="#10a010"/><stop offset="1" stop-color="#b0e0a8"/></linearGradient></defs><rect x="16.5" y="2" width="4" height="17" fill="#f0f080" stroke="#111" stroke-width="1.2"/><rect x="17" y="2.5" width="3" height="5.5" fill="#e08050"/><rect x="17" y="8" width="3" height="5" fill="#80d8f8"/><rect x="7.5" y="1" width="9" height="19.5" rx="0.8" fill="#88c0f8" stroke="#111" stroke-width="1.3"/><path d="M1 0.5L12.2 10.5L1 21Z" fill="url(#gg)"/><path d="M1 21L12.2 10.5" stroke="#108010" stroke-width="0.8"/></svg>
<div class="arr" style="left:1867px;top:313px"></div>
<!-- preview frame -->
<div class="a" style="left:1125px;top:349px;width:781px;height:1px;background:#fff"></div>
<div class="a" style="left:1126px;top:351px;width:757px;height:505px;background:#a8a8a8"></div>
<div class="a" style="left:1137px;top:351px;width:3px;height:505px;background:#0a78d7"></div>
<div class="a" style="left:1140px;top:351px;width:729px;height:505px;background:#fff;overflow:hidden" id="doc"></div>
<svg class="a" style="left:1140px;top:351px" width="729" height="505" viewBox="1140 351 729 505">
<defs><filter id="wob" x="-5%" y="-50%" width="110%" height="200%"><feTurbulence type="fractalNoise" baseFrequency="0.09" numOctaves="2" seed="3"/><feDisplacementMap in="SourceGraphic" scale="3.2"/></filter></defs>
<path d="M1180 380 L1716 380.5" stroke="#111" stroke-width="1.6"/>
<path d="M1180.5 380 L1180.5 860" stroke="#111" stroke-width="1.6"/>
<path d="M1825 430 L1825 860" stroke="#111" stroke-width="1.6"/>
<rect x="1717" y="379.5" width="107.5" height="50.5" fill="#fff" stroke="#111" stroke-width="1.8"/>
<path d="M1718 381H1824V392H1790L1776 401H1718Z" fill="#111"/>
<path d="M1718 405H1772L1786 397H1824V403H1790L1776 411H1718Z" fill="#111"/>
<text x="1723" y="421.5" font-family="Liberation Sans" font-size="10.5" font-weight="bold" textLength="19" lengthAdjust="spacingAndGlyphs" fill="#111">BIO</text>
<text x="1744" y="421.5" font-family="Liberation Sans" font-size="10.5" font-weight="bold" font-style="italic" textLength="32" lengthAdjust="spacingAndGlyphs" fill="#111">SOFT</text>
<path d="M1778 420 L1824 419.5" stroke="#111" stroke-width="2.5"/>
<text x="1187" y="401.5" font-family="Liberation Sans" font-size="17.5" font-weight="bold" textLength="108" lengthAdjust="spacingAndGlyphs" fill="#111" stroke="#111" stroke-width="0">OFFICE VISITS</text>
<path d="M1180 420 L1716 420" stroke="#111" stroke-width="1.5"/>
<path d="M1180 436.8 L1825 436.3" stroke="#111" stroke-width="1.5"/>
<path d="M1180 453.5 L1825 453" stroke="#111" stroke-width="1.5"/>
<path d="M1180 486.7 L1825 486.7" stroke="#111" stroke-width="1.5"/>
<path d="M1180 490.8 L1825 490.6" stroke="#111" stroke-width="1.5"/>
<path d="M1180 507.8 L1825 507.5" stroke="#111" stroke-width="1.5"/>
<path d="M1180 541 L1825 540.5" stroke="#111" stroke-width="1.5"/>
<path d="M1180 545.5 L1825 545" stroke="#111" stroke-width="1.5"/>
<text x="1187.5" y="434.4" font-family="Liberation Sans" font-size="11.5"  textLength="33.200000000000045" lengthAdjust="spacingAndGlyphs" fill="#111" stroke="#111" stroke-width="0.25">NAME</text>
<text x="1187.5" y="450.7" font-family="Liberation Sans" font-size="11.5"  textLength="48.90000000000009" lengthAdjust="spacingAndGlyphs" fill="#111" stroke="#111" stroke-width="0.25">ADDRESS</text>
<text x="1187.5" y="467.3" font-family="Liberation Sans" font-size="11.5"  textLength="65.09999999999991" lengthAdjust="spacingAndGlyphs" fill="#111" stroke="#111" stroke-width="0.25">OCUPATION</text>
<text x="1187.5" y="483.6" font-family="Liberation Sans" font-size="11.5"  textLength="58.40000000000009" lengthAdjust="spacingAndGlyphs" fill="#111" stroke="#111" stroke-width="0.25">EMPLOYER</text>
<text x="1187.5" y="504.9" font-family="Liberation Sans" font-size="11.5"  textLength="76.5" lengthAdjust="spacingAndGlyphs" fill="#111" stroke="#111" stroke-width="0.25">MEDICATIONS</text>
<text x="1187.5" y="521.3" font-family="Liberation Sans" font-size="11.5"  textLength="31.5" lengthAdjust="spacingAndGlyphs" fill="#111" stroke="#111" stroke-width="0.25">DRUG</text>
<text x="1187.5" y="537.5" font-family="Liberation Sans" font-size="11.5"  textLength="56.299999999999955" lengthAdjust="spacingAndGlyphs" fill="#111" stroke="#111" stroke-width="0.25">ALLERGIES</text>
<text x="1445" y="433.8" font-family="Liberation Sans" font-size="11.5"  textLength="73" lengthAdjust="spacingAndGlyphs" fill="#111" stroke="#111" stroke-width="0.25">.NSURANCE #</text>
<text x="1445" y="450" font-family="Liberation Sans" font-size="11.5"  textLength="57.700000000000045" lengthAdjust="spacingAndGlyphs" fill="#111" stroke="#111" stroke-width="0.25">PHONE (H)</text>
<text x="1574.5" y="450" font-family="Liberation Sans" font-size="11.5"  textLength="16.200000000000045" lengthAdjust="spacingAndGlyphs" fill="#111" stroke="#111" stroke-width="0.25">(O)</text>
<text x="1703" y="449.3" font-family="Liberation Sans" font-size="11.5"  textLength="18.799999999999955" lengthAdjust="spacingAndGlyphs" fill="#111" stroke="#111" stroke-width="0.25">(M)</text>
<text x="1445" y="467" font-family="Liberation Sans" font-size="11.5"  textLength="81.70000000000005" lengthAdjust="spacingAndGlyphs" fill="#111" stroke="#111" stroke-width="0.25">DATE OF BIRTH</text>
<text x="1574.5" y="467" font-family="Liberation Sans" font-size="11.5"  textLength="21.5" lengthAdjust="spacingAndGlyphs" fill="#111" stroke="#111" stroke-width="0.25">AGE</text>
<text x="1402" y="522" font-family="Liberation Sans" font-size="11.5"  textLength="60" lengthAdjust="spacingAndGlyphs" fill="#111" stroke="#111" stroke-width="0.25">DIAGNOSIS</text>
<text x="1617.3" y="522" font-family="Liberation Sans" font-size="11.5"  textLength="71.40000000000009" lengthAdjust="spacingAndGlyphs" fill="#111" stroke="#111" stroke-width="0.25">REFERRED BY</text>
<text x="1267" y="433.5" font-family="Liberation Sans" font-size="11.5" textLength="151" lengthAdjust="spacingAndGlyphs" fill="#111" stroke="#111" stroke-width="0.2" filter="url(#wob)">SKYLER   McLEOD</text>
<text x="1731" y="450.5" font-family="Liberation Sans" font-size="11.5" textLength="90" lengthAdjust="spacingAndGlyphs" fill="#111" stroke="#111" stroke-width="0.2" filter="url(#wob)">5·555 · 5555</text>
<text x="1454" y="482.5" font-family="Liberation Sans" font-size="11.5" textLength="114" lengthAdjust="spacingAndGlyphs" fill="#111" stroke="#111" stroke-width="0.2" filter="url(#wob)">12 MAR 1980</text>
<text x="1187.5" y="561" font-family="Liberation Sans" font-size="11.5"  textLength="99.5" lengthAdjust="spacingAndGlyphs" fill="#111" stroke="#111" stroke-width="0.25">DATE/VITAL SIGNS</text>
<path d="M1301.6 546 L1301.6 860" stroke="#505050" stroke-width="1.4"/>
<text x="1308" y="556.5" font-family="Liberation Sans" font-size="8"  textLength="46" lengthAdjust="spacingAndGlyphs" fill="#111" stroke="#111" stroke-width="0.25">SUBJECTIVE</text>
<text x="1375" y="568.5" font-family="Liberation Sans" font-size="8"  textLength="41" lengthAdjust="spacingAndGlyphs" fill="#111" stroke="#111" stroke-width="0.25">OBJECTIVE</text>
<text x="1444" y="579.8" font-family="Liberation Sans" font-size="8"  textLength="52" lengthAdjust="spacingAndGlyphs" fill="#111" stroke="#111" stroke-width="0.25">ASSESSMENT</text>
<text x="1531" y="591.2" font-family="Liberation Sans" font-size="8"  textLength="25" lengthAdjust="spacingAndGlyphs" fill="#111" stroke="#111" stroke-width="0.25">PLANS</text>
<path d="M1363 547 L1363 600" stroke="#111" stroke-width="2.6"/>
<path d="M1359.5 598L1363 604L1366.5 598Z" fill="#111"/>
<path d="M1431 561 L1431 600" stroke="#111" stroke-width="2.6"/>
<path d="M1427.5 598L1431 604L1434.5 598Z" fill="#111"/>
<path d="M1510 574 L1510 603" stroke="#111" stroke-width="2.6"/>
<path d="M1570 585 L1570 603" stroke="#111" stroke-width="2.6"/>
<path d="M1180 605 L1825 605" stroke="#383838" stroke-width="1.3"/>
<path d="M1180 629.8 L1825 629.8" stroke="#383838" stroke-width="1.3"/>
<path d="M1180 653.8 L1825 653.8" stroke="#383838" stroke-width="1.3"/>
<path d="M1180 678 L1825 678" stroke="#383838" stroke-width="1.3"/>
<path d="M1180 702 L1825 702" stroke="#383838" stroke-width="1.3"/>
<path d="M1180 725.8 L1825 725.8" stroke="#383838" stroke-width="1.3"/>
<path d="M1180 750 L1825 750" stroke="#383838" stroke-width="1.3"/>
<path d="M1180 774 L1825 774" stroke="#383838" stroke-width="1.3"/>
<path d="M1180 798.4 L1825 798.4" stroke="#383838" stroke-width="1.3"/>
<path d="M1180 822.7 L1825 822.7" stroke="#383838" stroke-width="1.3"/>
<path d="M1180 847 L1825 847" stroke="#383838" stroke-width="1.3"/>
<rect x="1482.5" y="601.5" width="105" height="29.5" fill="#ffd6ff" stroke="#111" stroke-width="2.2"/>
<path d="M1484 604.5 L1586 604.5" stroke="#b070b0" stroke-width="1"/>
<path d="M1510 600 L1510 604" stroke="#111" stroke-width="2.6"/>
<path d="M1570 600 L1570 604" stroke="#111" stroke-width="2.6"/>
<rect x="1589" y="598" width="29" height="34" fill="#fff"/>
<g transform="translate(1593.5,607.5)"><path d="M0.5 1.5L1.5 0.5H12.5L16 4V11H10V15.5H5.5L4 13.5V11H1.5L0.5 10Z" fill="#f8e2ea" stroke="#a02838" stroke-width="1.2"/><rect x="16" y="4" width="4" height="7" fill="#e05070" stroke="#a02838" stroke-width="1"/><path d="M0.5 3.5H4M0.5 7H4" stroke="#a02838" stroke-width="1"/></g>
<text x="1199" y="627" font-family="Liberation Serif" font-style="italic" font-size="18" textLength="100" lengthAdjust="spacingAndGlyphs" fill="#111" filter="url(#wob)">5 Jan 2018</text>
<text x="1319" y="628" font-family="Liberation Serif" font-style="italic" font-size="21" textLength="160" lengthAdjust="spacingAndGlyphs" fill="#111" filter="url(#wob)">pt. reporting  bad</text>
<text x="1492" y="625.5" font-family="Liberation Serif" font-style="italic" font-size="21" textLength="90" lengthAdjust="spacingAndGlyphs" fill="#111" filter="url(#wob)">headaches</text>
<text x="1617" y="627" font-family="Liberation Serif" font-style="italic" font-size="21" textLength="139" lengthAdjust="spacingAndGlyphs" fill="#111" filter="url(#wob)">ce  mid. Dec.</text>
<text x="1318" y="652.5" font-family="Liberation Serif" font-style="italic" font-size="21" textLength="444" lengthAdjust="spacingAndGlyphs" fill="#111" filter="url(#wob)">“feel different” from his usual headaches - rare.</text>
<text x="1318" y="677.5" font-family="Liberation Serif" font-style="italic" font-size="21" textLength="213" lengthAdjust="spacingAndGlyphs" fill="#111" filter="url(#wob)">lately  more frequent.</text>
<text x="1373" y="725" font-family="Liberation Serif" font-style="italic" font-size="21" textLength="6" lengthAdjust="spacingAndGlyphs" fill="#111" filter="url(#wob)">-</text>
<text x="1386" y="725" font-family="Liberation Serif" font-style="italic" font-size="21" textLength="297" lengthAdjust="spacingAndGlyphs" fill="#111" filter="url(#wob)">most  weekends over last month.</text>
<text x="1370" y="749" font-family="Liberation Serif" font-style="italic" font-size="21" textLength="5" lengthAdjust="spacingAndGlyphs" fill="#111" filter="url(#wob)">-</text>
<text x="1385" y="749" font-family="Liberation Serif" font-style="italic" font-size="21" textLength="407" lengthAdjust="spacingAndGlyphs" fill="#111" filter="url(#wob)">something  at work, esp. when doing heavy</text>
<text x="1390" y="773.5" font-family="Liberation Serif" font-style="italic" font-size="21" textLength="71" lengthAdjust="spacingAndGlyphs" fill="#111" filter="url(#wob)">cutting.</text>
<text x="1359" y="820" font-family="Liberation Serif" font-style="italic" font-size="21" textLength="7" lengthAdjust="spacingAndGlyphs" fill="#111" filter="url(#wob)">-</text>
<text x="1387" y="820" font-family="Liberation Serif" font-style="italic" font-size="21" textLength="280" lengthAdjust="spacingAndGlyphs" fill="#111" filter="url(#wob)">feels  behind eyes + throbbing</text>
<text x="1356" y="844.5" font-family="Liberation Serif" font-style="italic" font-size="21" textLength="6" lengthAdjust="spacingAndGlyphs" fill="#111" filter="url(#wob)">-</text>
<text x="1387" y="844.5" font-family="Liberation Serif" font-style="italic" font-size="21" textLength="288" lengthAdjust="spacingAndGlyphs" fill="#111" filter="url(#wob)">feels  pressure  at top of head</text>
</svg>
<div class="a" style="left:1869px;top:351px;width:2px;height:505px;background:#0a78d7"></div>
<!-- preview scrollbar -->
<div class="a" style="left:1883px;top:351px;width:22px;height:505px;background:#f6f6f6"></div>
<div class="a" style="left:1883px;top:351px;width:22px;height:21px;background:#f0f0f0;border-right:2px solid #a0a0a0;border-bottom:2px solid #a0a0a0;border-left:1px solid #fff;border-top:1px solid #fff"></div>
<svg class="a" style="left:1889px;top:358px" width="10" height="6"><path d="M0 6L5 0L10 6Z" fill="#111"/></svg>
<div class="a" style="left:1883px;top:372px;width:22px;height:22px;background:#f0f0f0;border-right:2px solid #a0a0a0;border-bottom:2px solid #a0a0a0;border-left:1px solid #fff;border-top:1px solid #fff"></div>
<div class="a" style="left:1883px;top:834px;width:22px;height:21px;background:#f0f0f0;border-right:2px solid #a0a0a0;border-bottom:2px solid #a0a0a0;border-left:1px solid #fff;border-top:1px solid #fff"></div>
<svg class="a" style="left:1889px;top:841px" width="10" height="6"><path d="M0 0L5 6L10 0Z" fill="#111"/></svg>
<div class="a" style="left:1905px;top:351px;width:1px;height:505px;background:#fff"></div>
<!-- preview bottom toolbar -->
<div class="a" style="left:1125px;top:856px;width:781px;height:45px;border-left:1px solid #a0a0a0;border-top:2px solid #a0a0a0;border-right:1px solid #fff;border-bottom:1px solid #fff;background:#f0f0f0"></div>
<div id="pvtb">
<svg class="a" style="left:1137px;top:871px" width="21" height="19" viewBox="0 0 21 19"><path d="M1.5 1.5H8.5V5.5H19.5V17.5H1.5Z" fill="none" stroke="#222" stroke-width="1.8"/><path d="M9 3.5H19.5V5.5" fill="none" stroke="#222" stroke-width="1.4"/></svg>
<svg class="a" style="left:1169px;top:869px" width="21" height="21" viewBox="0 0 21 21"><path d="M9 4H2V19H15V12" stroke="#222" stroke-width="2" fill="none"/><path d="M7 13L18 2M12 2H19V9" stroke="#222" stroke-width="2" fill="none"/></svg>
<div class="a" style="left:1222px;top:868px;width:144px;height:26px;background:#fff;border-left:2px solid #a0a0a0;border-top:2px solid #a0a0a0;border-right:1px solid #f8f8f8;border-bottom:1px solid #f8f8f8"></div>
<div class="t" style="left:1226px;top:872px;font-size:14px;font-style:italic;color:#4a78b8">Search Text...</div>
<svg class="a" style="left:1384px;top:870px" width="20" height="20" viewBox="0 0 20 20"><path d="M2 3H7V19H1V8Z" fill="#333"/><path d="M13 3H18L19 8V19H13Z" fill="#333"/><rect x="7" y="7" width="6" height="6" fill="#555"/><rect x="3" y="1" width="3" height="3" fill="#555"/><rect x="14" y="1" width="3" height="3" fill="#555"/></svg>
<svg class="a" style="left:1418px;top:870px" width="14" height="20"><path d="M13 1L1 10L13 19Z" fill="#a8a8a8"/><path d="M13 3L4 10L13 17" fill="#b8b8b8"/></svg>
<svg class="a" style="left:1450px;top:870px" width="14" height="20"><path d="M1 1L13 10L1 19Z" fill="#a8a8a8"/></svg>
<div class="a" style="left:1483px;top:868px;width:40px;height:26px;background:#fff;border-left:2px solid #a0a0a0;border-top:2px solid #a0a0a0;border-right:1px solid #e0e0e0;border-bottom:1px solid #e0e0e0"></div>
<div class="t" style="left:1488px;top:871px;font-size:13px;color:#111">1</div>
<div class="a" style="left:1522px;top:868px;width:15px;height:26px;background:#f0f0f0;border:1px solid #a0a0a0"></div>
<div class="a" style="left:1537px;top:868px;width:15px;height:26px;background:#f0f0f0;border:1px solid #a0a0a0"></div>
<svg class="a" style="left:1527px;top:877px" width="5" height="8"><path d="M4 0L0 4L4 8Z" fill="#111"/></svg>
<svg class="a" style="left:1543px;top:877px" width="5" height="8"><path d="M0 0L4 4L0 8Z" fill="#111"/></svg>
<div class="a" style="left:1559px;top:868px;width:45px;height:26px;background:#f0f0f0;border:1px solid #a0a0a0"></div>
<div class="t" style="left:1563px;top:871px;font-size:13px;color:#111">73</div>
<svg class="a" style="left:1626px;top:870px" width="16" height="20"><path d="M15 1L3 10L15 19Z" fill="#a0a0a0"/></svg>
<svg class="a" style="left:1657px;top:870px" width="16" height="20"><path d="M15 1L3 10L15 19Z" fill="#a0a0a0"/></svg>
<svg class="a" style="left:1688px;top:871px" width="18" height="18"><path d="M9 1L17 9L9 17L1 9Z" fill="#a0a0a0"/></svg>
<svg class="a" style="left:1720px;top:870px" width="16" height="21"><path d="M2 1L14 10L2 19" fill="none" stroke="#3a60a0" stroke-width="1.5"/><path d="M2 1V20" stroke="#3a60a0" stroke-width="1.5"/></svg>
<svg class="a" style="left:1752px;top:870px" width="16" height="21"><path d="M2 1L14 10L2 19Z" fill="#f0e040" stroke="#c0b020"/></svg>
<svg class="a" style="left:1794px;top:868px" width="22" height="22" viewBox="0 0 22 22"><circle cx="13.5" cy="8.5" r="6.5" fill="#d8ecfc" stroke="#6a90c8" stroke-width="1.5"/><path d="M10.5 8.5H16.5M13.5 5.5V11.5" stroke="#3a70c0" stroke-width="1.8"/><path d="M9 13L2 20" stroke="#e89050" stroke-width="3.5" stroke-linecap="round"/></svg>
<svg class="a" style="left:1825px;top:868px" width="22" height="22" viewBox="0 0 22 22"><circle cx="13.5" cy="8.5" r="6.5" fill="#d8ecfc" stroke="#6a90c8" stroke-width="1.5"/><path d="M10.5 8.5H16.5" stroke="#b01010" stroke-width="1.8"/><path d="M9 13L2 20" stroke="#e89050" stroke-width="3.5" stroke-linecap="round"/></svg>
<svg class="a" style="left:1856px;top:868px" width="22" height="22" viewBox="0 0 22 22"><rect x="7" y="2" width="13" height="13" rx="4" fill="#d8ecfc" stroke="#6a90c8" stroke-width="1.5"/><path d="M9 13L2 20" stroke="#e89050" stroke-width="3.5" stroke-linecap="round"/></svg>
<div class="arr" style="left:1886px;top:879px;border-left-width:4px;border-right-width:4px;border-top-width:4px"></div>

</div>

</div>

</body></html>
